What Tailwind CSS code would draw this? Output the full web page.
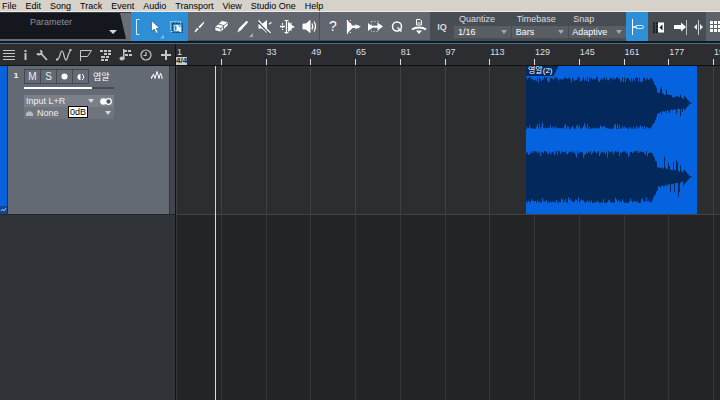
<!DOCTYPE html>
<html lang="en">
  <head>
    <meta charset="UTF-8" />
    <meta name="viewport" content="width=device-width, initial-scale=1.0" />
    <title>Studio One</title>
    <script src="https://cdn.jsdelivr.net/npm/@tailwindcss/browser@4"></script>
  </head>
  <body class="h-screen flex flex-col overflow-hidden bg-[#232425] text-[#e4e6e8] font-['Liberation_Sans','Noto_Sans_CJK_KR',sans-serif]">
    <!-- menu -->
    <nav class="h-3 shrink-0 flex items-center gap-[9px] px-[2px] bg-[#d6d2c9] border-b border-[#eeece8] text-black text-[9px] leading-[10px] whitespace-nowrap">
      <button>File</button>
      <button>Edit</button>
      <button>Song</button>
      <button>Track</button>
      <button>Event</button>
      <button>Audio</button>
      <button>Transport</button>
      <button>View</button>
      <button>Studio One</button>
      <button>Help</button>
    </nav>

    <!-- toolbar -->
    <header class="h-[29px] shrink-0 flex bg-[#484c53]">
      <div class="w-[131px] shrink-0 bg-[#6a6f77] border-t border-[#3a3e44]">
        <button class="relative block w-[126px] h-[26px] bg-[#14171d] text-[9px] leading-3 text-[#8f949b] pr-6 pb-2 [clip-path:polygon(0_0,120px_0,100%_100%,0_100%)]">
          Parameter
          <svg class="absolute right-[9px] bottom-[4px] w-[8px] h-[5px]" viewBox="0 0 8 5" fill="#d5d8dc"><path d="M0 0h8L4 4z" /></svg>
        </button>
      </div>
      <div class="flex shrink-0 bg-[#2f8fd6] w-[57px] text-white">
        <div class="w-[13px] flex items-center justify-center">
          <svg class="w-[5px] h-4" viewBox="0 0 5 16" fill="none" stroke="#d3ebfb"><path d="M4.5 .5h-3v15h3" /></svg>
        </div>
        <button aria-label="Arrow tool" class="relative w-[22px] flex items-center justify-center">
          <svg class="w-[22px] h-7" viewBox="0 0 22 28"><path d="M7.500 7.500v11l2.700-2.500 2 4.500 2-1-2-4.200h3.500z" fill="#fff" stroke="#1d4e78" stroke-width=".6" /><path d="M20 21.500v4h-4z" fill="#7cbbe8" /></svg>
        </button>
        <button aria-label="Range tool" class="w-[22px] flex items-center justify-center">
          <svg class="w-[22px] h-7" viewBox="0 0 22 28" fill="none"><path d="M6.500 10.500h10v9h-10z" stroke="#123a5c" stroke-dasharray="2 1" /><path d="M4.500 16.500v-8h10v2M6.500 18.500h-2" stroke="#a9d6f5" stroke-dasharray="2 1" /><path d="M8.500 12.500h6v5h-6z" stroke="#a9d6f5" /><path d="M10.500 11.500v7l2-1.500 1.500 2.500 1.500-1-1.500-2.200h2z" fill="#fff" /></svg>
        </button>
      </div>
      <div class="flex shrink-0 bg-[#62666e] mb-px">
        <button aria-label="Split tool" class="w-[22px]">
          <svg class="w-[22px] h-7" viewBox="0 0 22 28"><path d="M16.500 8.500l-.5 3-4 5-2-1.500zM9 15.500l2 1.500-3.500 3.500-1.500-.5z" fill="#fff" stroke="#3f434a" stroke-width=".4" /></svg>
        </button>
        <button aria-label="Eraser tool" class="w-[22px]">
          <svg class="w-[22px] h-7" viewBox="0 0 22 28"><path d="M12 8.500l6 1.500v3.500L11 20l-6-1.500V15z" fill="#fff" stroke="#3f434a" stroke-width=".5" /><path d="M8 12l5.500 1.500v4M5.500 15l5.500 1.500 6.500-6M11 16.500V20" fill="none" stroke="#6d7178" /></svg>
        </button>
        <button aria-label="Paint tool" class="w-[22px]">
          <svg class="w-[22px] h-7" viewBox="0 0 22 28"><path d="M14.500 8.500l2 1.500-7.500 8.500-4 2.500 1.500-4.500z" fill="#fff" stroke="#3f434a" stroke-width=".4" /><path d="M21 21v4h-4z" fill="#a9adb3" /></svg>
        </button>
        <button aria-label="Mute tool" class="w-[22px]">
          <svg class="w-[22px] h-7" viewBox="0 0 22 28"><path d="M4.500 12h3.500l5-4v13l-5-4.500H4.500z" fill="#fff" /><path d="M4 10l12 12" stroke="#484c53" stroke-width="1.500" /><path d="M4.500 8.500l12 12.500M15 12l2.500-1.500" stroke="#fff" stroke-width="1.300" /></svg>
        </button>
        <button aria-label="Bend tool" class="w-[22px]">
          <svg class="w-[22px] h-7" viewBox="0 0 22 28"><path d="M4 14.500h5" stroke="#fff" stroke-width="1.500" /><path d="M6.500 11v7" stroke="#fff" stroke-dasharray="2 1" /><path d="M12 9.500l2.500 2 1-1.500v3l3.500 2-3.500 1.500v3l-1-1.500-2.500 2z" fill="#fff" /><path d="M10.500 8v14M8.500 8.500h4M8.500 20.500h4" stroke="#fff" stroke-width="1.200" /></svg>
        </button>
        <button aria-label="Listen tool" class="w-[22px] border-r border-[#4b4f56]">
          <svg class="w-[22px] h-7" viewBox="0 0 22 28" fill="none" stroke="#fff"><path d="M5 12h3l4-3.500v12l-4-3.500H5z" fill="#fff" /><path d="M14 11.500q1.500 3 0 6M16 9.500q3 5 0 10" stroke-width="1.200" /></svg>
        </button>
        <button aria-label="Help" class="w-[22px] text-[14px] text-white leading-7 pl-1">?</button>
        <button aria-label="Strip silence" class="w-[22px]">
          <svg class="w-[22px] h-7" viewBox="0 0 22 28"><path d="M8.500 8v13" stroke="#e8eaec" stroke-dasharray="1 2" /><path d="M5.500 8v14" stroke="#fff" stroke-width="1.200" /><path d="M6 9l4.500 4.500h3V12l2 1.500 1.500-.5v1l2 .7-2 .8v1l-1.500-.5-2 1.500v-1.500h-3L6 20.500z" fill="#fff" /></svg>
        </button>
        <button aria-label="Audio bend" class="w-[22px]">
          <svg class="w-[22px] h-7" viewBox="0 0 22 28"><path d="M4 11v8l4-3v-2zM13.500 10.500l5.500 4-5.500 4z" fill="#fff" /><path d="M7.500 9.500h7v10h-7z" fill="none" stroke="#d9dbde" stroke-dasharray="1 2" /><path d="M7 14.700h8" stroke="#fff" stroke-width="2" /></svg>
        </button>
        <button aria-label="Quantize" class="w-[22px]">
          <svg class="w-[22px] h-7" viewBox="0 0 22 28" fill="none" stroke="#fff" stroke-width="1.500"><circle cx="11" cy="14.500" r="4.500" /><path d="M11.500 15.500l4 4" /></svg>
        </button>
        <button aria-label="Macro" class="w-[22px]">
          <svg class="w-[22px] h-7" viewBox="0 0 22 28"><path d="M8.500 7.500h3.500l1.500 1.500v4h-5z" fill="none" stroke="#fff" /><path d="M9.500 11h3" stroke="#fff" /><path d="M4 17.500q2.500-2 7-2t7 2" fill="none" stroke="#fff" stroke-width="2.200" /><path d="M8 18.500h6l-3 3.500z" fill="#fff" /></svg>
        </button>
      </div>
      <button aria-label="Input quantize" class="w-6 shrink-0 text-[9px] font-bold text-[#d5d8dc] leading-7">IQ</button>
      <div class="flex grow gap-px text-[9px] leading-[11px] text-[#dcdfe2]">
        <div class="grow basis-0 flex flex-col pt-[2px]">
          <label for="quantize" class="pl-[5px] h-3">Quantize</label>
          <div class="relative bg-[#595d64]">
            <select id="quantize" class="appearance-none w-full h-3 pl-1 text-white leading-3 block"><option>1/16</option></select>
            <svg class="absolute right-1 top-1 w-[6px] h-[4px] pointer-events-none" viewBox="0 0 6 4" fill="#a3a7ad"><path d="M0 0h6L3 4z" /></svg>
          </div>
        </div>
        <div class="grow basis-0 flex flex-col pt-[2px]">
          <label for="timebase" class="pl-[5px] h-3">Timebase</label>
          <div class="relative bg-[#595d64]">
            <select id="timebase" class="appearance-none w-full h-3 pl-1 text-white leading-3 block"><option>Bars</option></select>
            <svg class="absolute right-1 top-1 w-[6px] h-[4px] pointer-events-none" viewBox="0 0 6 4" fill="#a3a7ad"><path d="M0 0h6L3 4z" /></svg>
          </div>
        </div>
        <div class="grow basis-0 flex flex-col pt-[2px]">
          <label for="snap" class="pl-1 h-3">Snap</label>
          <div class="relative bg-[#595d64]">
            <select id="snap" class="appearance-none w-full h-3 pl-[3px] text-white leading-3 block"><option>Adaptive</option></select>
            <svg class="absolute right-1 top-1 w-[6px] h-[4px] pointer-events-none" viewBox="0 0 6 4" fill="#a3a7ad"><path d="M0 0h6L3 4z" /></svg>
          </div>
        </div>
      </div>
      <div class="flex shrink-0 w-[94px]">
        <button aria-label="Snap to grid" class="w-[22px] bg-[#2f8fd6]">
          <svg class="w-[22px] h-7" viewBox="0 0 22 28" fill="none"><path d="M6.500 6v16" stroke="#fff" /><path d="M7 14h4" stroke="#fff" stroke-width="1.500" /><rect x="9.500" y="12.500" width="8" height="3" rx="1.500" stroke="#cfe7f8" /></svg>
        </button>
        <button aria-label="Autoscroll" class="w-[22px]">
          <svg class="w-[22px] h-7" viewBox="0 0 22 28"><path d="M5 10.500h6M5 13.500h6M5 16.500h6M5 19h6" stroke="#15181c" stroke-width="2" stroke-dasharray="2 1" /><path d="M10 9.500h6v10h-6z" fill="#fff" /><path d="M14.500 11.500v6l-3-3z" fill="#15181c" /></svg>
        </button>
        <button aria-label="Cursor follows edit" class="w-[22px]">
          <svg class="w-[22px] h-7" viewBox="0 0 22 28"><path d="M4 12h7V9.500l5 4.500-5 4.500V16H4z" fill="#fff" /><path d="M16.500 7v15" stroke="#b9bdc2" /></svg>
        </button>
        <button aria-label="Split view" class="w-[14px]">
          <svg class="w-[14px] h-7" viewBox="0 0 14 28"><path d="M6.500 7v15" stroke="#c6c9cd" /><path d="M5 11v6l-3-3zM8 11v6l3-3z" fill="#eceef0" /></svg>
        </button>
        <button aria-label="Grid" class="grow bg-[#5e626a]">
          <svg class="w-[14px] h-7" viewBox="0 0 14 28" fill="#fff"><path d="M4 8h3v3H4zM8 8h3v3H8zM12 8h3v3h-3zM4 12h3v3H4zM8 12h3v3H8zM12 12h3v3h-3zM4 16h3v3H4zM8 16h3v3H8zM12 16h3v3h-3z" /></svg>
        </button>
      </div>
    </header>
    <div class="h-[3px] shrink-0 bg-[#14191f] border-b border-[#46718a]"></div>

    <main class="grow min-h-0 flex">
      <!-- track column -->
      <aside class="w-[176px] shrink-0 flex flex-col bg-[#303337] border-r border-[#111214]">
        <div class="h-[22px] shrink-0 flex items-center justify-between px-[3px] bg-[#2b2d30] border-b border-[#141517]">
          <button aria-label="Track list"><svg class="w-3 h-3" viewBox="0 0 12 12" stroke="#c4c7ca"><path d="M0 1.500h12M0 4.500h12M0 7.500h12M0 10.500h12" /></svg></button>
          <button aria-label="Inspector"><svg class="w-[5px] h-3" viewBox="0 0 5 12" fill="#c4c7ca"><path d="M1.500 1h2v2h-2zM1.500 4h2v7h-2z" /></svg></button>
          <button aria-label="Options"><svg class="w-3 h-3" viewBox="0 0 12 12" fill="none" stroke="#c4c7ca" stroke-width="1.800"><path d="M1 4.500q2 2 4 0t-1-3M5.500 5l5.500 6" /></svg></button>
          <button aria-label="Automation"><svg class="w-4 h-3" viewBox="0 0 16 12" fill="none" stroke="#c4c7ca" stroke-width="1.200"><path d="M1 11q2-1 3-5t2-4 2 4.500 2 4.500 2-4.500L14.500 1" /><path d="M0 9.500h2v2H0zM13.500 0h2v2h-2z" fill="#c4c7ca" stroke="none" /></svg></button>
          <button aria-label="Markers"><svg class="w-3 h-3" viewBox="0 0 12 12" fill="none" stroke="#c4c7ca"><path d="M.5 12V1.500h11l-4 6h-7" /></svg></button>
          <button aria-label="Arranger"><svg class="w-[11px] h-3" viewBox="0 0 11 12" fill="#c4c7ca"><path d="M0 1h3v2H0zM4 1h3v2H4zM8 1h3v2H8zM4 4h3v2H4zM8 4h3v2H8zM1 7h4v2H1zM6 7h3v2H6zM1 10h3v2H1zM5 10h3v2H5z" /></svg></button>
          <button aria-label="Chords"><svg class="w-[13px] h-3" viewBox="0 0 13 12" fill="#c4c7ca"><path d="M4 0h1.500v10H4zM5 1h3v2H5zM9 1h3v2H9zM6 5h3v2H6zM10 5h3v2h-3z" /><ellipse cx="3" cy="9.500" rx="2.500" ry="2" /></svg></button>
          <button aria-label="Tempo"><svg class="w-3 h-3" viewBox="0 0 12 12" fill="none" stroke="#c4c7ca" stroke-width="1.200"><circle cx="6" cy="6" r="5" /><path d="M6 3v3.500H3.500" /></svg></button>
          <button aria-label="Add track"><svg class="w-3 h-3" viewBox="0 0 12 12" stroke="#c4c7ca" stroke-width="2"><path d="M6 1v10M1 6h10" /></svg></button>
        </div>

        <section class="h-[149px] shrink-0 flex border-b border-[#222427]">
          <div class="w-[7px] shrink-0 flex flex-col justify-end bg-[#0862de]">
            <svg class="w-[7px] h-2 bg-[#15458c]" viewBox="0 0 7 8" fill="none" stroke="#9cc2f2"><path d="M1 5l1.500-2 1.500 2 2-3" /></svg>
          </div>
          <div class="grow bg-[#646a73] border-l border-[#2b2d30] flex items-start gap-[3px] pl-1 pt-[3px]">
            <span class="w-2 text-center text-[8px] font-bold leading-[13px] text-white">1</span>
            <div class="w-[90px] ml-px">
              <div class="flex items-center">
                <div class="flex shrink-0 border border-[#45494f] divide-x divide-[#45494f] text-[10px] leading-3 text-[#eceef0]">
                  <button aria-label="Mute" class="w-[16px] h-[13px]">M</button>
                  <button aria-label="Solo" class="w-[16px] h-[13px]">S</button>
                  <button aria-label="Record" class="w-[16px] h-[13px] flex items-center justify-center"><svg class="w-[7px] h-[7px]" viewBox="0 0 7 7" fill="#fff"><circle cx="3.500" cy="3.500" r="3" /></svg></button>
                  <button aria-label="Monitor" class="w-[15px] h-[13px] flex items-center justify-center"><svg class="w-2 h-2" viewBox="0 0 8 8" fill="#fff"><path d="M3.500 1v6a3 3 0 0 1 0-6z" /><path d="M5 1a3.500 3.500 0 0 1 0 6" fill="none" stroke="#fff" /></svg></button>
                </div>
                <span class="pl-1 text-[9px] leading-3 text-white whitespace-nowrap">염알</span>
              </div>
              <div class="mt-[3px] h-[2px] bg-[#484c52]"><div class="h-[2px] w-3/4 bg-white"></div></div>
              <div class="mt-[6px] text-[9px] leading-3 text-[#eceef0]">
                <div class="relative h-3 bg-[#7b8088] flex items-center">
                  <select aria-label="Input" class="appearance-none w-[72px] h-3 pl-[2px] leading-3"><option>Input L+R</option></select>
                  <svg class="absolute right-[20px] w-[6px] h-[4px] pointer-events-none" viewBox="0 0 6 4" fill="#d5d8dc"><path d="M0 0h6L3 4z" /></svg>
                  <button aria-label="Stereo" class="ml-auto mr-[2px]"><svg class="w-3 h-[7px]" viewBox="0 0 12 7"><circle cx="3.500" cy="3.500" r="3.300" fill="#fff" /><circle cx="8.500" cy="3.500" r="2.800" fill="#555a62" stroke="#fff" stroke-width="1.300" /></svg></button>
                </div>
                <div class="relative h-3 bg-[#70757d] flex items-center">
                  <svg class="ml-[2px] w-[7px] h-[5px] shrink-0" viewBox="0 0 7 5" fill="#b5b9be"><path d="M0 2h1V1h1V0h1v1h1V0h1v1h1v1h1v3H0z" /></svg>
                  <select aria-label="Instrument" class="appearance-none h-3 grow pl-1 leading-3"><option>None</option></select>
                  <svg class="absolute right-[3px] w-[6px] h-[4px] pointer-events-none" viewBox="0 0 6 4" fill="#d5d8dc"><path d="M0 0h6L3 4z" /></svg>
                  <span class="absolute left-[44px] -top-px h-3 px-px border border-black bg-white text-black leading-[10px]">0dB</span>
                </div>
              </div>
            </div>
            <svg class="ml-auto mr-[6px] mt-[2px] w-3 h-[9px]" viewBox="0 0 12 9" fill="none" stroke="#fff"><path d="M.5 5.500v2L2.500 3 4 7.500 6 .5 8 7.500 9.500 2 11 6v2" /></svg>
          </div>
          <div class="w-[6px] shrink-0 bg-[#42464c] border-l border-[#34373b]"></div>
        </section>
      </aside>

      <!-- arrangement -->
      <div class="relative grow min-w-0 flex flex-col overflow-hidden">
        <div class="h-[22px] shrink-0 bg-[#2b2d30] border-b border-[#101113] relative">
          <div id="ruler" class="h-full grid grid-cols-[repeat(12,minmax(0,1fr))_7px] text-[9px] leading-[9px] text-[#dcdfe2]"></div>
          <span class="absolute left-0 bottom-0 h-2 bg-[#c9cbcd] text-[#222] text-[8px] font-bold leading-2">4/4</span>
        </div>
        <div class="relative h-[149px] shrink-0 bg-[#2c2d2e] border-b border-[#414345]">
          <div class="lanes h-full grid grid-cols-[repeat(12,minmax(0,1fr))_7px] text-[#3f4143]"></div>
          <div class="absolute inset-y-0 left-[350px] w-[171px] bg-[#0663e0]">
            <svg class="w-full h-full" viewBox="0 0 171 148" preserveAspectRatio="none" fill="#03285c">
              <path id="wave-left" />
              <path id="wave-right" />
            </svg>
            <span class="absolute left-0 top-0 h-[10px] pl-[2px] pr-[6px] bg-[#062a60] text-white text-[8px] leading-[10px] whitespace-nowrap [clip-path:polygon(0_0,100%_0,calc(100%_-_5px)_100%,0_100%)]">영알(2)</span>
          </div>
        </div>
        <div class="lanes grow grid grid-cols-[repeat(12,minmax(0,1fr))_7px] text-[#353739]"></div>
        <div class="absolute left-[39px] top-[22px] bottom-0 w-px bg-[#d8d8d8]"></div>
      </div>
    </main>

    <script>
      const ruler = document.getElementById("ruler");
      for (let i = 0; i < 13; i++) {
        const cell = document.createElement("div");
        cell.className = "relative pt-1 pl-px whitespace-nowrap";
        cell.textContent = 1 + i * 16;
        const tick = document.createElement("i");
        tick.className = "absolute left-0 bottom-0 w-px h-[6px] bg-[#dcdfe2]";
        cell.appendChild(tick);
        ruler.appendChild(cell);
      }

      document.querySelectorAll(".lanes").forEach((lane) => {
        for (let i = 0; i < 13; i++) {
          const cell = document.createElement("div");
          cell.className = "border-l border-current";
          lane.appendChild(cell);
        }
      });

      // small fixed-seed generator so the waveform is the same on each load
      let seed = 11;
      const rand = () => {
        seed = (seed * 16807) % 2147483647;
        return seed / 2147483647;
      };

      function level(x, tail) {
        if (x < 126) return 26 - rand() * rand() * 7;
        if (x < 131) return 24 - (x - 126) * 2 - rand() * 2;
        if (x < 158) {
          const base = 9 - (x - 131) * 0.2;
          const spike = rand() < 0.35 ? rand() * tail : rand() * 2;
          return base + spike;
        }
        return Math.max(0.5, (164 - x) * 1.2);
      }

      function wave(id, mid, tail) {
        let d = "";
        for (let x = 0; x < 166; x++) {
          const up = level(x, tail);
          const down = level(x, tail);
          d += `M${x} ${mid - up}h1v${up + down}h-1z`;
        }
        document.getElementById(id).setAttribute("d", d);
      }
      wave("wave-left", 37, 9);
      wave("wave-right", 111, 16);
    </script>
  </body>
</html>
